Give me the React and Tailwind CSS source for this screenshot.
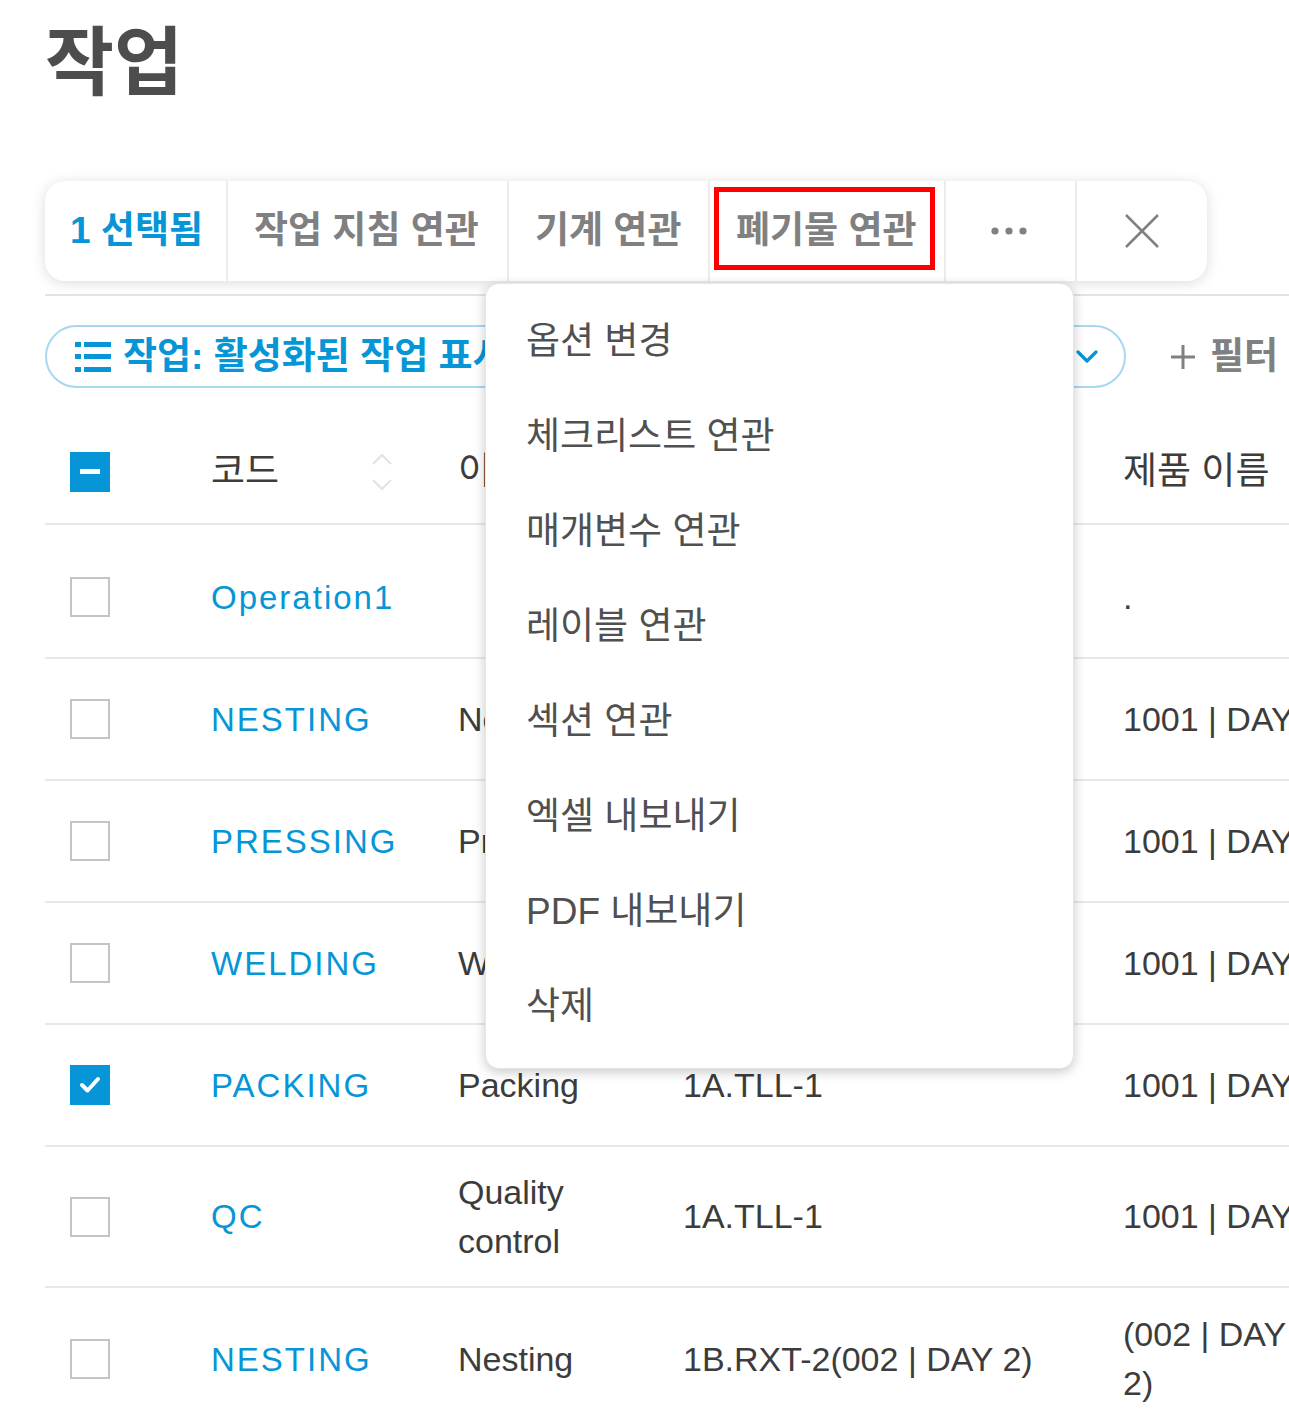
import React from "react";

const BLUE = "#0696d7";

const rows = [
  { code: "Operation1", name: "", loc: "", product: ".", h: "h-[134px] pt-[12px]", checked: false },
  { code: "NESTING", name: "Nesting", loc: "1A.TLL-1", product: "1001 | DAY 1", h: "h-[122px]", checked: false },
  { code: "PRESSING", name: "Pressing", loc: "1A.TLL-1", product: "1001 | DAY 1", h: "h-[122px]", checked: false },
  { code: "WELDING", name: "Welding", loc: "1A.TLL-1", product: "1001 | DAY 1", h: "h-[122px]", checked: false },
  { code: "PACKING", name: "Packing", loc: "1A.TLL-1", product: "1001 | DAY 1", h: "h-[122px]", checked: true },
  { code: "QC", name: "Quality control", loc: "1A.TLL-1", product: "1001 | DAY 1", h: "h-[141px]", checked: false },
  { code: "NESTING", name: "Nesting", loc: "1B.RXT-2(002 | DAY 2)", product: "(002 | DAY 2)", h: "h-[144px]", checked: false, wrap: true },
];

const menuItems = [
  "옵션 변경",
  "체크리스트 연관",
  "매개변수 연관",
  "레이블 연관",
  "섹션 연관",
  "엑셀 내보내기",
  "PDF 내보내기",
  "삭제",
];

function Checkbox({ checked }) {
  if (checked) {
    return (
      <div className="w-[40px] h-[40px] bg-[#0696d7] flex items-center justify-center">
        <svg width="22" height="18" viewBox="0 0 22 18">
          <polyline points="3,9 8.5,14.5 19,3" fill="none" stroke="white" strokeWidth="4" strokeLinecap="round" strokeLinejoin="round" />
        </svg>
      </div>
    );
  }
  return <div className="w-[40px] h-[40px] border-2 border-[#c4c4c4] bg-white" />;
}

export default function App() {
  return (
    <div
      className="relative w-[1289px] h-[1428px] overflow-hidden bg-white"
      style={{ fontFamily: '"Liberation Sans", "Noto Sans CJK KR", sans-serif' }}
    >
      <div className="pl-[45px]">
        <h1 className="pt-[26px] text-[75px] leading-[74px] font-bold text-[#4d4d4d]">작업</h1>

        {/* selection action bar */}
        <div className="mt-[81px] flex h-[100px] w-[1162px] rounded-[20px] bg-white shadow-[0_2px_14px_rgba(0,0,0,0.14)] text-[37px] font-bold text-[#808080] whitespace-nowrap">
          <div className="w-[181px] flex items-center pl-[25px] text-[#0696d7]">1 선택됨</div>
          <div className="w-[281px] flex items-center pl-[26px] border-l-2 border-[#ececec]">작업 지침 연관</div>
          <div className="w-[201px] flex items-center pl-[26px] border-l-2 border-[#ececec]">기계 연관</div>
          <div className="relative w-[236px] flex items-center pl-[26px] border-l-2 border-[#ececec]">
            폐기물 연관
            <div className="absolute left-[4px] top-[6px] w-[221px] h-[83px] border-[5px] border-[#ff0000]" />
          </div>
          <div className="w-[131px] flex items-center justify-center border-l-2 border-[#ececec]">
            <svg width="40" height="10" viewBox="0 0 40 10" className="mr-[4px]">
              <circle cx="6" cy="5" r="3.6" fill="#808080" />
              <circle cx="20" cy="5" r="3.6" fill="#808080" />
              <circle cx="34" cy="5" r="3.6" fill="#808080" />
            </svg>
          </div>
          <div className="w-[132px] flex items-center justify-center border-l-2 border-[#ececec]">
            <svg width="34" height="34" viewBox="0 0 34 34">
              <line x1="1" y1="1" x2="33" y2="33" stroke="#808080" strokeWidth="2.5" />
              <line x1="33" y1="1" x2="1" y2="33" stroke="#808080" strokeWidth="2.5" />
            </svg>
          </div>
        </div>

        <div className="mt-[13px] h-[2px] bg-[#e3e3e3]" />

        {/* filter row */}
        <div className="mt-[29px] flex items-center">
          <div className="w-[1081px] h-[63px] rounded-full border-2 border-[#a8d8f0] flex items-center pl-[28px] pr-[26px] overflow-hidden">
            <svg width="36" height="30" viewBox="0 0 36 30" className="shrink-0">
              <rect x="0" y="0" width="6" height="5" fill={BLUE} />
              <rect x="9" y="0" width="27" height="5" fill={BLUE} />
              <rect x="0" y="12" width="6" height="5" fill={BLUE} />
              <rect x="9" y="12" width="27" height="5" fill={BLUE} />
              <rect x="0" y="25" width="6" height="5" fill={BLUE} />
              <rect x="9" y="25" width="27" height="5" fill={BLUE} />
            </svg>
            <span className="ml-[12px] text-[37px] font-bold text-[#0696d7] whitespace-nowrap">작업: 활성화된 작업 표시</span>
            <svg width="22" height="14" viewBox="0 0 22 14" className="ml-auto shrink-0">
              <polyline points="2,2 11,11 20,2" fill="none" stroke={BLUE} strokeWidth="3.2" strokeLinecap="round" strokeLinejoin="round" />
            </svg>
          </div>
          <div className="ml-[44px] flex items-center text-[37px] text-[#808080] whitespace-nowrap">
            <svg width="26" height="26" viewBox="0 0 26 26">
              <line x1="13" y1="1" x2="13" y2="25" stroke="#808080" strokeWidth="3" />
              <line x1="1" y1="13" x2="25" y2="13" stroke="#808080" strokeWidth="3" />
            </svg>
            <span className="ml-[14px] font-bold">필터</span>
          </div>
        </div>

        {/* table header */}
        <div className="mt-[32px] h-[105px] flex items-center border-b-2 border-[#e8e8e8] text-[37px] text-[#3c3c3c] whitespace-nowrap">
          <div className="w-[166px] pl-[25px]">
            <div className="w-[40px] h-[40px] bg-[#0696d7] flex items-center justify-center">
              <div className="w-[20px] h-[5px] bg-white" />
            </div>
          </div>
          <div className="w-[247px] flex items-center">
            <span>코드</span>
            <svg width="22" height="40" viewBox="0 0 22 40" className="ml-auto mr-[65px]">
              <polyline points="2,12 11,3 20,12" fill="none" stroke="#e2e2e2" strokeWidth="2" />
              <polyline points="2,28 11,37 20,28" fill="none" stroke="#e2e2e2" strokeWidth="2" />
            </svg>
          </div>
          <div className="w-[225px]">이름</div>
          <div className="w-[440px]">위치</div>
          <div>제품 이름</div>
        </div>

        {/* rows */}
        {rows.map((r, i) => (
          <div key={i} className={`${r.h} flex items-center border-b-2 border-[#e8e8e8] text-[34px] leading-[49px] text-[#3c3c3c]`}>
            <div className="w-[166px] pl-[25px] shrink-0">
              <Checkbox checked={r.checked} />
            </div>
            <div className="w-[247px] shrink-0 text-[33px] tracking-[2px] text-[#0696d7] whitespace-nowrap">{r.code}</div>
            <div className="w-[225px] shrink-0 pr-[30px]">{r.name}</div>
            <div className="w-[440px] shrink-0 whitespace-nowrap">{r.loc}</div>
            <div className={r.wrap ? "w-[180px]" : "whitespace-nowrap"}>{r.product}</div>
          </div>
        ))}
      </div>

      {/* more menu */}
      <div className="absolute left-[485px] top-[283px] w-[589px] h-[786px] rounded-[14px] bg-white shadow-[0_3px_12px_rgba(0,0,0,0.22)] border border-[#e6e6e6] pt-[10px]">
        {menuItems.map((m) => (
          <div key={m} className="h-[95px] flex items-center pl-[40px] text-[37px] text-[#505050] whitespace-nowrap">
            {m}
          </div>
        ))}
      </div>
    </div>
  );
}
